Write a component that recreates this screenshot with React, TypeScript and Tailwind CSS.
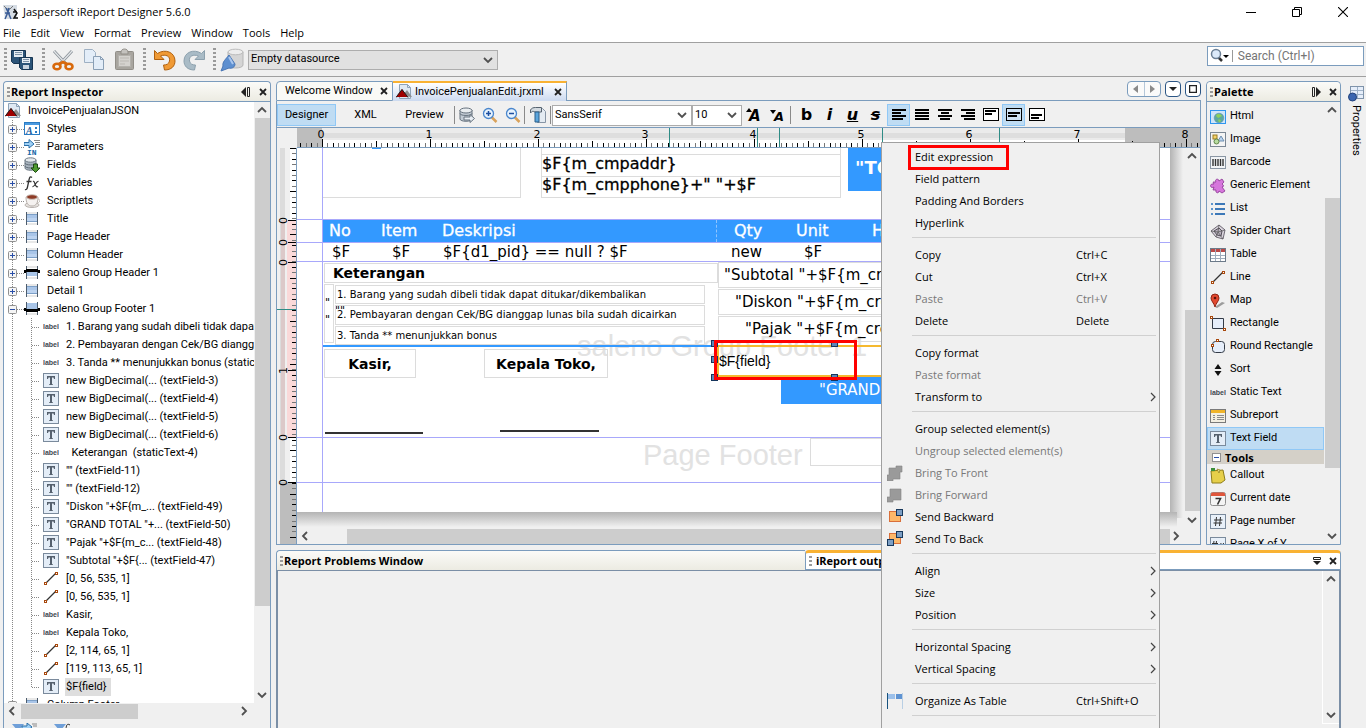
import React, { useState } from 'react';

const UI = 'font-[Roboto,"Liberation_Sans",sans-serif]';
const SEGOE = 'font-["Open_Sans","Noto_Sans",sans-serif]';

/* ---------- icons ---------- */

const ICONS: Record<string, React.ReactNode> = {
  report: (
    <>
      <path d="M3.5.5h8l3 3v11h-11z" fill="#dfe9f3" stroke="#8ea3b8" />
      <path d="M11.5.5v3h3" fill="none" stroke="#8ea3b8" />
      <path d="M6 12l5-6 5 7z" fill="#8d8d8d" />
      <path d="M0 13l6-8 6 8z" fill="#a00000" />
      <path d="M0 13.5l6-8 6 8" fill="none" stroke="#222" />
    </>
  ),
  styles: (
    <>
      <rect x=".5" y="1.5" width="15" height="12" fill="#fff" stroke="#2b7cc4" />
      <path d="M1 2h14v2H1z" fill="#4a9ae0" />
      <text x="2" y="12.5" fontSize="10" fontStyle="italic" fontWeight="bold" fill="#1f5f9f" fontFamily="Liberation Serif">A</text>
      <path d="M11 6h2v2h-2zM11 10h2v2h-2z" fill="#2b7cc4" />
    </>
  ),
  params: (
    <>
      <path d="M10 1.5h6M11 3.5h5M12 5.5h4M11 7.5h5" stroke="#888" />
      <path d="M0 3.5h5V.5l5 4.5-5 4V6.5H0z" fill="#9fd0f5" stroke="#2a6ea8" />
      <text x="3" y="15.5" fontSize="8" fontWeight="bold" fill="#1c69a8" fontFamily="Liberation Mono">IN</text>
    </>
  ),
  fields: (
    <>
      <path d="M1 3v8c0 3 11 3 11 0V3z" fill="#a9b4bf" stroke="#6f7b86" />
      <ellipse cx="6.5" cy="3" rx="5.5" ry="2.2" fill="#e3e8ec" stroke="#6f7b86" />
      <path d="M1 6c0 2.6 11 2.6 11 0M1 9c0 2.6 11 2.6 11 0" fill="none" stroke="#5f6b76" />
      <path d="M9.5 7h4v4H16l-4.5 4.5L7 11h2.500z" fill="#4f9a30" stroke="#1c4a12" />
    </>
  ),
  fx: (
    <>
      <path d="M8 2.5C6.5 1 5.5 2 5 5L3.5 12c-.5 2.5-1.5 3-2.500 2.500M2.500 6.500h5" fill="none" stroke="#333" strokeWidth="1.3" />
      <path d="M9 6.500c2-1.500 2 7 5 5M14.500 6.500c-2-1-4 6-6 5" fill="none" stroke="#333" strokeWidth="1.2" />
    </>
  ),
  cup: (
    <>
      <ellipse cx="8" cy="12" rx="7" ry="2.5" fill="#e6e2df" stroke="#b9b3ae" />
      <path d="M2 4c0 6 2 9 6 9s6-3 6-9z" fill="#f5f2f0" stroke="#b8b1ab" />
      <ellipse cx="8" cy="4" rx="5.5" ry="2.3" fill="#8e3b26" stroke="#cfc7c1" />
      <path d="M14 6c3 0 2 4-1 4" fill="none" stroke="#c5beb8" />
    </>
  ),
  band: (
    <>
      <path d="M2.5 1v13M13.5 1v13" stroke="#4c5c6d" />
      <path d="M3 1h10v2H3zM3 12h10v2H3z" fill="#e8e8e8" />
      <path d="M3 3h10v8H3z" fill="#a9c5e8" />
      <path d="M3 3.5h10M3 10.500h10" stroke="#7c9fc7" />
      <path d="M3 7h10v3H3z" fill="#bcd3f0" />
    </>
  ),
  gheader: (
    <>
      <path d="M2.5 1v13M13.5 1v13" stroke="#4c5c6d" />
      <path d="M3 7h10v4H3z" fill="#a9c5e8" />
      <path d="M3 1h10v2H3zM3 12h10v2H3z" fill="#e8e8e8" />
      <path d="M0 5h2V4h12v1h2v3h-2V7H2v1H0z" fill="#000" />
    </>
  ),
  gfooter: (
    <>
      <path d="M2.5 1v13M13.5 1v13" stroke="#4c5c6d" />
      <path d="M3 2h10v6H3z" fill="#a9c5e8" />
      <path d="M3 12h10v2H3z" fill="#e8e8e8" />
      <path d="M0 7h2v1h12V7h2v3h-2v1H2v-1H0z" fill="#000" />
    </>
  ),
  label: <text x="0" y="10" fontSize="7" fontWeight="bold" fill="#3f4750" fontFamily="Liberation Sans">label</text>,
  text: (
    <>
      <rect x=".5" y=".5" width="15" height="14" fill="#e4edf7" stroke="#7a8a9c" />
      <path d="M4 3h8v3h-1l-.5-1.5H9V11l1 .5v.5H6v-.5l1-.5V4.5H5.5L5 6H4z" fill="#56616e" />
    </>
  ),
  line: (
    <>
      <path d="M2.5 12.5l10-10" stroke="#333" strokeWidth="1.2" />
      <rect x="1.5" y="11.5" width="2" height="2" fill="#fff" stroke="#a8480c" />
      <rect x="12.5" y="1.5" width="2" height="2" fill="#fff" stroke="#a8480c" />
    </>
  ),
  html: (
    <>
      <rect x=".5" y="1.5" width="15" height="13" fill="#cfe5f8" stroke="#2e96f0" />
      <circle cx="9" cy="9" r="4.8" fill="#5ba9a0" stroke="#5d8fae" strokeWidth=".6" />
      <path d="M6 6c2-2 5-1 6 1-1 1-2 0-3 2-1 0-3-1-3-3zM8 11c1-1 3 0 3 1l-2 1.5z" fill="#8ed05c" />
    </>
  ),
  image: (
    <>
      <rect x=".5" y=".5" width="15" height="14" fill="#f4f4f4" stroke="#7b8794" />
      <rect x="3" y="3" width="4" height="4" fill="#f2d16a" stroke="#9a7a20" />
      <path d="M8 9l3-5 3 5z" fill="#b9d3ee" stroke="#6f8fb0" />
      <circle cx="6.5" cy="9.5" r="2.5" fill="#b8dca0" stroke="#62854a" />
    </>
  ),
  barcode: (
    <>
      <rect x=".5" y="1.5" width="15" height="12" fill="#f2f4f6" stroke="#8a96a3" />
      <path d="M3 4v7M5.5 4v7M8 4v7M10.5 4v7M13 4v7" stroke="#333" strokeWidth="1.4" />
    </>
  ),
  puzzle: (
    <path d="M6 4C4 1 9 0 9 3l3-2 2 3-2 2c2 1 2 3 0 3l3 4-3 2-3-2c0 3-4 2-3-1H3l1-3c-3 2-5-2-2-3h2l-1-2z" fill="#d676dc" stroke="#8a3592" strokeWidth=".8" />
  ),
  list: (
    <>
      <path d="M5 3h10M5 8h10M5 13h10" stroke="#3c78b8" strokeWidth="2" />
      <path d="M1 3h2M1 8h2M1 13h2" stroke="#5b93cc" strokeWidth="2" />
    </>
  ),
  spider: (
    <>
      <path d="M9 1l6 5-2 9-7-2-5-6z" fill="#d9d4dc" stroke="#6e6873" />
      <path d="M9 4l3 3-1 5-4-1-3-4z" fill="#b9b1be" stroke="#554f5a" />
      <path d="M9 1L8 8l7-2M8 8l5 7M8 8l-2 5M8 8L1 7" stroke="#555" fill="none" strokeWidth=".7" />
    </>
  ),
  table: (
    <>
      <rect x=".5" y="1.5" width="15" height="13" fill="#fff" stroke="#6c7a89" />
      <path d="M1 2h14v3H1z" fill="#b94a48" />
      <path d="M5.5 2v12M10.5 2v12M1 8.5h14M1 11.5h14" stroke="#9fadbc" />
    </>
  ),
  map: (
    <>
      <path d="M5 14l7-5 3 1-8 5z" fill="#777" opacity=".7" />
      <path d="M5 14C4 10 1 8 1 5a4 4 0 018 0c0 3-3 5-4 9z" fill="#e2492f" stroke="#8e2413" />
      <circle cx="5" cy="5" r="1.300" fill="#5a120a" />
    </>
  ),
  rect: (
    <>
      <path d="M2.5 2.5h11v10h-11z" fill="#e6eefa" stroke="#333b47" />
      <rect x=".5" y=".5" width="2" height="2" fill="#fff" stroke="#a8480c" />
      <rect x="13.5" y="12.5" width="2" height="2" fill="#fff" stroke="#a8480c" />
    </>
  ),
  roundrect: (
    <>
      <rect x="2.5" y="2.5" width="12" height="11" rx="3" fill="#e6eefa" stroke="#333b47" />
      <rect x="1.5" y="5.5" width="2" height="2" fill="#fff" stroke="#a8480c" />
      <rect x="6.5" y=".5" width="2" height="2" fill="#fff" stroke="#a8480c" />
    </>
  ),
  sort: <path d="M4.5 7L8 2l3.500 5zM4.500 9L8 14l3.500-5z" fill="#111" />,
  subreport: (
    <>
      <rect x=".5" y="1.5" width="15" height="13" fill="#f3efe2" stroke="#7a7a7a" />
      <path d="M1 2h14v3H1z" fill="#f0b429" />
      <path d="M3 7.5h2M3 9.5h2M3 11.5h2M7 7.5h7M7 9.5h7M7 11.5h7" stroke="#8a8a8a" />
    </>
  ),
  callout: (
    <>
      <path d="M1 3l12-1 2 10-4 3H2z" fill="#e6cf4a" stroke="#8e7d1a" />
      <path d="M7 1l2 4 1-3z" fill="#f5eaa0" stroke="#8e7d1a" strokeWidth=".7" />
      <path d="M1 0h4v3H1z" fill="#3c8f3a" />
    </>
  ),
  date: (
    <>
      <rect x=".5" y="1.5" width="15" height="13" rx="2" fill="#f4f4f4" stroke="#8f8f8f" />
      <path d="M1 3c0-1 1-1.500 2-1.500h10c1 0 2 .5 2 1.500v2H1z" fill="#e0563c" />
      <path d="M5.500 7.500h5l-3 6" fill="none" stroke="#333" strokeWidth="1.600" />
    </>
  ),
  hash: (
    <>
      <rect x=".5" y=".5" width="15" height="14" fill="#e8f0f9" stroke="#7a8a9c" />
      <path d="M6.5 3l-1 9M10.5 3l-1 9M4 6h8.500M3.500 9H12" stroke="#333" fill="none" />
    </>
  ),
  hash2: (
    <>
      <rect x=".5" y=".5" width="15" height="14" fill="#e8f0f9" stroke="#7a8a9c" />
      <path d="M4 4l-1 8M6.5 4l-1 8M2 6.5h6M2 9.500h5.500M11 6l-1 6M13.500 6l-1 6M9 8h5.500M9 10.500h5" stroke="#333" fill="none" />
    </>
  ),
  front: <path d="M9 1h6v6h-2v7H6v2H0v-6h2V3h7z" fill="#9a9a9a" stroke="#858585" strokeWidth=".6" />,
  forward: <path d="M3 2h11v11H6v2H0v-5h3z" fill="#9a9a9a" stroke="#858585" strokeWidth=".6" />,
  backward: (
    <>
      <rect x="2.5" y="2.5" width="11" height="10" fill="#fdb869" stroke="#d9703a" />
      <rect x="9.5" y=".5" width="6" height="6" fill="#7d9fc4" stroke="#17385c" />
    </>
  ),
  back: (
    <>
      <rect x="2.5" y="2.5" width="11" height="10" fill="#fdb869" stroke="#d9703a" />
      <rect x="9.5" y=".5" width="6" height="6" fill="#7d9fc4" stroke="#17385c" />
      <rect x=".5" y="8.5" width="6" height="6" fill="#7d9fc4" stroke="#17385c" />
    </>
  ),
  organize: (
    <>
      <path d="M1 1h7v5H1z" fill="#9cc0ea" />
      <path d="M9 1h6v5H9z" fill="#5f93d2" />
      <path d="M.5 0v16" stroke="#17527e" />
      <path d="M15.5 0v16" stroke="#b9cfe4" />
    </>
  ),
  dbgo: (
    <>
      <path d="M1 3v9c0 3 12 3 12 0V3z" fill="#c3ccd5" stroke="#66727e" />
      <ellipse cx="7" cy="3.500" rx="6" ry="2.500" fill="#e9edf0" stroke="#66727e" />
      <path d="M1 6.500c0 2.600 12 2.600 12 0" fill="none" stroke="#66727e" />
      <path d="M5 10h6V7.500l4.500 4-4.500 4V13H5z" fill="#e8eef4" stroke="#66727e" />
    </>
  ),
  zoomin: (
    <>
      <path d="M9.5 10l5 5" stroke="#d9a25a" strokeWidth="2.500" />
      <circle cx="6.5" cy="6.5" r="5" fill="#e6f2fd" stroke="#4a86cc" strokeWidth="1.300" />
      <path d="M4 6.5h5M6.5 4v5" stroke="#1d4fa0" strokeWidth="1.500" />
    </>
  ),
  zoomout: (
    <>
      <path d="M9.5 10l5 5" stroke="#d9a25a" strokeWidth="2.500" />
      <circle cx="6.5" cy="6.5" r="5" fill="#e6f2fd" stroke="#4a86cc" strokeWidth="1.300" />
      <path d="M4 6.5h5" stroke="#1d4fa0" strokeWidth="1.500" />
    </>
  ),
  hammer: (
    <>
      <path d="M8.5 1.5h4l3 3v11h-8z" fill="#e4ebf2" stroke="#8795a5" />
      <path d="M.5 3c1-2 3-2.500 5-2.500h6V5H5C3 4 2 4 .5 6z" fill="#d3dae0" stroke="#55626f" />
      <path d="M5 5h4v10H5z" fill="#5ba5dc" stroke="#2b5f8a" />
    </>
  ),
  grow: (
    <>
      <path d="M0 5l3-4 3 4z" fill="#000" />
      <text x="3" y="14" fontSize="15" fontStyle="italic" fontWeight="bold" fontFamily="DejaVu Sans">A</text>
    </>
  ),
  shrink: (
    <>
      <path d="M0 3h6L3 7z" fill="#000" />
      <text x="4" y="14" fontSize="13" fontStyle="italic" fontWeight="bold" fontFamily="DejaVu Sans">A</text>
    </>
  ),
  left: <path d="M1 3h14M1 6h9M1 9h14M1 12h11" stroke="#000" strokeWidth="2" />,
  justify: <path d="M1 3h14M1 6h14M1 9h14M1 12h14" stroke="#000" strokeWidth="2" />,
  center: <path d="M1 3h14M4 6h8M1 9h14M3 12h10" stroke="#000" strokeWidth="2" />,
  right: <path d="M1 3h14M6 6h9M1 9h14M4 12h11" stroke="#000" strokeWidth="2" />,
  vtop: (
    <>
      <rect x=".5" y="1.5" width="15" height="12" fill="#fff" stroke="#000" />
      <path d="M2 4h11M2 7h7" stroke="#000" strokeWidth="2" />
    </>
  ),
  vmid: (
    <>
      <rect x=".5" y="1.5" width="15" height="12" fill="#cfe3f5" stroke="#000" />
      <path d="M2 6h12M2 9h9" stroke="#000" strokeWidth="2" />
    </>
  ),
  vbot: (
    <>
      <rect x=".5" y="1.5" width="15" height="12" fill="#fff" stroke="#000" />
      <path d="M2 8h11M2 11h8" stroke="#000" strokeWidth="2" />
    </>
  ),
  saveall: (
    <>
      <path d="M1.5 2.5h14v13h-12l-2-2z" fill="#2c5478" stroke="#173552" />
      <path d="M4 3h9v6H4z" fill="#e6edf3" />
      <path d="M5 4.5h7M5 6.5h7" stroke="#7d93a8" />
      <path d="M9.5 9.5h13v12h-11l-2-2z" fill="#2c5478" stroke="#173552" />
      <path d="M12 10h8v5h-8z" fill="#e6edf3" />
      <path d="M13 11.5h6M13 13.5h6" stroke="#7d93a8" />
      <path d="M13 17h6v4h-6z" fill="#c8d3de" />
    </>
  ),
  cut: (
    <>
      <path d="M3 3l12 13M21 3L9 16" stroke="#8d949b" strokeWidth="3" />
      <path d="M3 3l12 13M21 3L9 16" stroke="#e3e6e9" strokeWidth="1.200" />
      <ellipse cx="6" cy="18.500" rx="3.500" ry="2.800" fill="none" stroke="#d8690c" strokeWidth="2.600" />
      <ellipse cx="18" cy="18.500" rx="3.500" ry="2.800" fill="none" stroke="#d8690c" strokeWidth="2.600" />
      <path d="M8 16l4-2 4 2" stroke="#d8690c" strokeWidth="2.800" fill="none" />
    </>
  ),
  copy: (
    <>
      <path d="M2.5 1.5h8l3 3v10h-11z" fill="#e3edf8" stroke="#9eb0c3" />
      <path d="M11.5 8.5h7l3 3v10h-10z" fill="#e3edf8" stroke="#8a9fb5" />
      <path d="M18.5 8.5v3h3" fill="none" stroke="#8a9fb5" />
    </>
  ),
  paste: (
    <>
      <rect x="2.5" y="3.5" width="18" height="18" rx="1" fill="#a8a59f" stroke="#918e88" />
      <rect x="5.5" y="7.5" width="12" height="11" fill="#d4d2ce" stroke="#b3b1ac" />
      <path d="M8 4c0-4 7-4 7 0v2H8z" fill="#c4c2be" stroke="#918e88" />
      <path d="M7 10h9M7 13h9M7 16h5" stroke="#bbb8b3" />
    </>
  ),
  undo: <path d="M2.5 2.500v9h9.500L8.500 8c5-2 10 0 9 5-.5 3-3 4-6 4l1 5c7 0 10.500-4 10.500-9C23 4 13 .5 5.500 5.500z" fill="#f09a35" stroke="#b0610f" />,
  redo: <path d="M21.500 2.500v9H12L15.500 8c-5-2-10 0-9 5 .5 3 3 4 6 4l-1 5C4.500 22 1 18 1 13 1 4 11 .5 18.500 5.500z" fill="#a9bbc6" stroke="#8ca0ad" />,
  datasource: (
    <>
      <path d="M8 4v13c0 4 15 4 15 0V4z" fill="#d5d5d5" stroke="#b5b5b5" />
      <ellipse cx="15.500" cy="4" rx="7.500" ry="2.800" fill="#ededed" stroke="#bbb" />
      <path d="M9 7l6 9c0 3-3 5-6 4l-8 3 2-5c-1-4 3-7 6-11z" fill="#5d8fd0" stroke="#4a76b4" />
      <path d="M9 9l4 7" stroke="#a9c6ee" strokeWidth="2" />
    </>
  ),
};

const Icon = ({ name, box = 16 }: { name: string; box?: number }) => (
  <svg viewBox={`0 0 ${box} ${box}`} width={box} height={box} className="shrink-0" aria-hidden="true">
    {ICONS[name]}
  </svg>
);

const Chevron = ({ dir }: { dir: 'up' | 'down' | 'left' | 'right' }) => {
  const d = { up: 'M2 8l4-4 4 4', down: 'M2 4l4 4 4-4', left: 'M8 2L4 6l4 4', right: 'M4 2l4 4-4 4' }[dir];
  return (
    <svg viewBox="0 0 12 12" className="size-3 shrink-0" aria-hidden="true">
      <path d={d} fill="none" stroke="#505050" strokeWidth="1.800" />
    </svg>
  );
};

const Close = () => (
  <svg viewBox="0 0 8 8" width="8" height="8" aria-hidden="true">
    <path d="M1 1l6 6M7 1L1 7" stroke="#222" strokeWidth="1.800" />
  </svg>
);

const Grip = ({ className = 'h-6' }: { className?: string }) => (
  <span className={`w-[3px] shrink-0 bg-[linear-gradient(#9a9a9a_2px,transparent_2px)] bg-[length:3px_4px] ${className}`} />
);

/* ---------- data ---------- */

type TreeRow = { icon: string; text: string; open?: boolean };

const GROUPS: TreeRow[] = [
  { icon: 'styles', text: 'Styles' },
  { icon: 'params', text: 'Parameters' },
  { icon: 'fields', text: 'Fields' },
  { icon: 'fx', text: 'Variables' },
  { icon: 'cup', text: 'Scriptlets' },
  { icon: 'band', text: 'Title' },
  { icon: 'band', text: 'Page Header' },
  { icon: 'band', text: 'Column Header' },
  { icon: 'gheader', text: 'saleno Group Header 1' },
  { icon: 'band', text: 'Detail 1' },
  { icon: 'gfooter', text: 'saleno Group Footer 1', open: true },
];

const CHILDREN: TreeRow[] = [
  { icon: 'label', text: '1. Barang yang sudah dibeli tidak dapat' },
  { icon: 'label', text: '2. Pembayaran dengan Cek/BG dianggap' },
  { icon: 'label', text: '3. Tanda ** menunjukkan bonus (staticText-3)' },
  { icon: 'text', text: 'new BigDecimal(... (textField-3)' },
  { icon: 'text', text: 'new BigDecimal(... (textField-4)' },
  { icon: 'text', text: 'new BigDecimal(... (textField-5)' },
  { icon: 'text', text: 'new BigDecimal(... (textField-6)' },
  { icon: 'label', text: '\u00a0 Keterangan \u00a0(staticText-4)' },
  { icon: 'text', text: '"" (textField-11)' },
  { icon: 'text', text: '"" (textField-12)' },
  { icon: 'text', text: '"Diskon "+$F{m_... (textField-49)' },
  { icon: 'text', text: '"GRAND TOTAL "+... (textField-50)' },
  { icon: 'text', text: '"Pajak "+$F{m_c... (textField-48)' },
  { icon: 'text', text: '"Subtotal "+$F{... (textField-47)' },
  { icon: 'line', text: '[0, 56, 535, 1]' },
  { icon: 'line', text: '[0, 56, 535, 1]' },
  { icon: 'label', text: 'Kasir,' },
  { icon: 'label', text: 'Kepala Toko,' },
  { icon: 'line', text: '[2, 114, 65, 1]' },
  { icon: 'line', text: '[119, 113, 65, 1]' },
  { icon: 'text', text: '$F{field}' },
];

const PALETTE = [
  ['html', 'Html'],
  ['image', 'Image'],
  ['barcode', 'Barcode'],
  ['puzzle', 'Generic Element'],
  ['list', 'List'],
  ['spider', 'Spider Chart'],
  ['table', 'Table'],
  ['line', 'Line'],
  ['map', 'Map'],
  ['rect', 'Rectangle'],
  ['roundrect', 'Round Rectangle'],
  ['sort', 'Sort'],
  ['label', 'Static Text'],
  ['subreport', 'Subreport'],
  ['text', 'Text Field'],
];

const TOOLS = [
  ['callout', 'Callout'],
  ['date', 'Current date'],
  ['hash', 'Page number'],
  ['hash2', 'Page X of Y'],
];

type MenuEntry = { text: string; keys?: string; off?: boolean; sub?: boolean; icon?: string; marked?: boolean };

const MENU: MenuEntry[][] = [
  [{ text: 'Edit expression', marked: true }, { text: 'Field pattern' }, { text: 'Padding And Borders' }, { text: 'Hyperlink' }],
  [
    { text: 'Copy', keys: 'Ctrl+C' },
    { text: 'Cut', keys: 'Ctrl+X' },
    { text: 'Paste', keys: 'Ctrl+V', off: true },
    { text: 'Delete', keys: 'Delete' },
  ],
  [{ text: 'Copy format' }, { text: 'Paste format', off: true }, { text: 'Transform to', sub: true }],
  [
    { text: 'Group selected element(s)' },
    { text: 'Ungroup selected element(s)', off: true },
    { text: 'Bring To Front', off: true, icon: 'front' },
    { text: 'Bring Forward', off: true, icon: 'forward' },
    { text: 'Send Backward', icon: 'backward' },
    { text: 'Send To Back', icon: 'back' },
  ],
  [{ text: 'Align', sub: true }, { text: 'Size', sub: true }, { text: 'Position', sub: true }],
  [{ text: 'Horizontal Spacing', sub: true }, { text: 'Vertical Spacing', sub: true }],
  [{ text: 'Organize As Table', keys: 'Ctrl+Shift+O', icon: 'organize' }],
];

/* Report elements, in page coordinates */
type ReportNode = { x: number; y: number; w: number; h: number; text?: string; cls?: string };

const EDGE = 'border border-[#dcdcdc]';
const HEAD = 'text-base text-white [-webkit-text-stroke:0.3px_#fff]';
const FIELD = 'text-base [-webkit-text-stroke:0.3px_#000]';
const NODES: ReportNode[] = [
  { x: 25, y: -10, w: 199, h: 60, cls: EDGE },
  { x: 244, y: -10, w: 300, h: 17, cls: EDGE },
  { x: 75, y: -3, w: 9, h: 4, cls: 'bg-[#3399ff]' },
  { x: 244, y: 6, w: 300, h: 23, text: '$F{m_cmpaddr}', cls: `${EDGE} pb-1 ${FIELD}` },
  { x: 244, y: 28, w: 300, h: 22, text: '$F{m_cmpphone}+" "+$F', cls: `${EDGE} pb-1 ${FIELD}` },
  { x: 551, y: -4, w: 305, h: 47, text: '"TOKO', cls: 'bg-[#3399ff] pl-[7px] text-lg font-bold text-white' },
  { x: 25, y: 72, w: 831, h: 22, cls: 'bg-[#3399ff]' },
  { x: 32, y: 72, w: 40, h: 22, text: 'No', cls: HEAD },
  { x: 84, y: 72, w: 60, h: 22, text: 'Item', cls: HEAD },
  { x: 145, y: 72, w: 100, h: 22, text: 'Deskripsi', cls: HEAD },
  { x: 419, y: 72, w: 18, h: 22, cls: 'border-l border-dashed border-[#8fc4ff]' },
  { x: 437, y: 72, w: 50, h: 22, text: 'Qty', cls: HEAD },
  { x: 499, y: 72, w: 50, h: 22, text: 'Unit', cls: HEAD },
  { x: 575, y: 72, w: 60, h: 22, text: 'Harga', cls: HEAD },
  { x: 35, y: 94, w: 40, h: 20, text: '$F', cls: 'text-[15px]' },
  { x: 95, y: 94, w: 40, h: 20, text: '$F', cls: 'text-[15px]' },
  { x: 146, y: 94, w: 220, h: 20, text: '$F{d1_pid} == null ? $F', cls: 'text-[15px]' },
  { x: 434, y: 94, w: 60, h: 20, text: 'new', cls: 'text-[15px]' },
  { x: 507, y: 94, w: 40, h: 20, text: '$F', cls: 'text-[15px]' },
  { x: 27, y: 115, w: 394, h: 20, text: 'Keterangan', cls: `${EDGE} pl-[8px] text-[14px] font-bold` },
  { x: 27, y: 136, w: 10, h: 59, cls: EDGE },
  { x: 28, y: 148, w: 8, h: 12, text: '"', cls: 'text-[11px]' },
  { x: 28, y: 165, w: 8, h: 12, text: '"', cls: 'text-[11px]' },
  { x: 38, y: 156, w: 20, h: 12, text: '""', cls: 'text-[11px]' },
  { x: 38, y: 137, w: 370, h: 19, text: '1. Barang yang sudah dibeli tidak dapat ditukar/dikembalikan', cls: `${EDGE} pl-px text-[10px]` },
  { x: 38, y: 157, w: 370, h: 20, text: '2. Pembayaran dengan Cek/BG dianggap lunas bila sudah dicairkan', cls: `${EDGE} pl-px text-[10px]` },
  { x: 38, y: 178, w: 370, h: 19, text: '3. Tanda ** menunjukkan bonus', cls: `${EDGE} pl-px text-[10px]` },
  { x: 421, y: 114, w: 435, h: 26, text: '"Subtotal "+$F{m_crdt}', cls: `${EDGE} pl-[5px] text-[15px]` },
  { x: 421, y: 141, w: 435, h: 26, text: '"Diskon "+$F{m_crdt}', cls: `${EDGE} pl-[16px] text-[15px]` },
  { x: 421, y: 168, w: 435, h: 26, text: '"Pajak "+$F{m_crdt}', cls: `${EDGE} pl-[26px] text-[15px]` },
  { x: 25, y: 197, w: 394, h: 2, cls: 'bg-[#3399ff]' },
  { x: 27, y: 201, w: 92, h: 29, text: 'Kasir,', cls: `${EDGE} justify-center text-[14px] font-bold` },
  { x: 187, y: 201, w: 124, h: 29, text: 'Kepala Toko,', cls: `${EDGE} justify-center text-[14px] font-bold` },
  { x: 28, y: 284, w: 98, h: 2, cls: 'bg-[#333]' },
  { x: 203, y: 282, w: 99, h: 2, cls: 'bg-[#333]' },
  { x: 513, y: 290, w: 343, h: 28, cls: EDGE },
  { x: 484, y: 228, w: 372, h: 28, text: '"GRAND TOTAL "', cls: 'bg-[#3399ff] pl-[38px] text-[15px] text-white' },
];

/* ---------- pieces ---------- */

const PanelHead = ({ title, children }: { title: string; children?: React.ReactNode }) => (
  <div className="flex h-5 shrink-0 items-center gap-px rounded-t-sm border-b border-[#7b9cbd] bg-gradient-to-b from-[#fbfbf8] to-[#ecebe2] px-[3px]">
    <Grip className="h-[10px]" />
    <h2 className={`${SEGOE} flex-1 text-[11px] font-bold leading-4`}>{title}</h2>
    <span className="flex items-center gap-2">{children}</span>
  </div>
);

const IconButton = ({ label, children, className = '' }: { label: string; children: React.ReactNode; className?: string }) => (
  <button type="button" aria-label={label} className={`flex shrink-0 items-center justify-center ${className}`}>
    {children}
  </button>
);

const VScroll = ({ before, thumb, after }: { before: string; thumb: string; after: string }) => (
  <div className="flex w-4 shrink-0 flex-col items-center bg-[#f0f0f0]">
    <span className="flex h-4 items-center"><Chevron dir="up" /></span>
    <span className={before} />
    <span className={`w-[15px] bg-[#cdcdcd] ${thumb}`} />
    <span className={after} />
    <span className="flex h-4 items-center"><Chevron dir="down" /></span>
  </div>
);

const GroupRow = ({ row }: { row: TreeRow }) => (
  <li className="flex h-[18px] items-center">
    <svg width="20" height="18" className="shrink-0" aria-hidden="true">
      <path d="M8.500 0v18M13 9.500h7" stroke="#888" strokeDasharray="1 1" fill="none" />
      <rect x="4.500" y="5.500" width="8" height="8" rx="1" fill="#f5f5f5" stroke="#919191" />
      <path d={row.open ? 'M6 9.500h5' : 'M6 9.500h5M8.500 7v5'} stroke="#2a4fa8" />
    </svg>
    <Icon name={row.icon} />
    <span className="pl-[7px]">{row.text}</span>
  </li>
);

const ChildRow = ({ row, last }: { row: TreeRow; last: boolean }) => (
  <li className="flex h-[18px] items-center whitespace-nowrap">
    <svg width="39" height="18" className="shrink-0" aria-hidden="true">
      <path d={`M8.500 0v18M27.500 0v${last ? 9 : 18}M28 9.500h8`} stroke="#888" strokeDasharray="1 1" fill="none" />
    </svg>
    <Icon name={row.icon} />
    <span className={last ? 'ml-[6px] bg-[#dedede] pl-px pr-1 leading-[18px]' : 'pl-[7px]'}>{row.text}</span>
  </li>
);

const Inspector = () => (
  <aside className="flex w-[268px] shrink-0 flex-col rounded-t-sm border-x border-t border-[#7b9cbd] bg-[#f0f0f0]">
    <PanelHead title="Report Inspector">
      <IconButton label="Minimize">
        <svg width="10" height="10" aria-hidden="true"><path d="M5 0v10L0 5z" fill="#222" /><path d="M6.500.5h2v9h-2z" fill="none" stroke="#222" /></svg>
      </IconButton>
      <IconButton label="Close"><Close /></IconButton>
    </PanelHead>
    <div className="flex min-h-0 flex-1">
      <ul className={`${UI} min-w-0 flex-1 overflow-hidden bg-white text-[11px] leading-[18px]`}>
        <li className="flex h-[18px] items-center pl-px">
          <Icon name="report" />
          <span className="pl-[7px]">InvoicePenjualanJSON</span>
        </li>
        {GROUPS.map((row) => <GroupRow key={row.text} row={row} />)}
        {CHILDREN.map((row, i) => <ChildRow key={i} row={row} last={i === CHILDREN.length - 1} />)}
        <GroupRow row={{ icon: 'band', text: 'Column Footer' }} />
      </ul>
      <VScroll before="h-0" thumb="grow-[6]" after="grow" />
    </div>
    <div className="flex h-4 shrink-0 items-center pr-5">
      <span className="flex w-[17px] pl-[2px]"><Chevron dir="left" /></span>
      <span className="h-[15px] w-[117px] bg-[#cdcdcd]" />
      <span className="flex-1" />
      <Chevron dir="right" />
    </div>
    <div className="flex h-[9px] shrink-0 items-start gap-4 overflow-hidden pl-2 pt-1">
      <svg width="26" height="8" aria-hidden="true"><path d="M0 1h12L7 7H5z" fill="#6f9fd8" /><path d="M10 3h5V0l5 4-5 4V6h-5z" fill="#9fd0f5" stroke="#2a6ea8" /><path d="M20 1h5M21 3h4" stroke="#888" /></svg>
      <svg width="20" height="8" aria-hidden="true"><path d="M0 1h12L7 7H5z" fill="#6f9fd8" /><path d="M12 8c0-6 1-8 4-6" fill="none" stroke="#333" /></svg>
    </div>
  </aside>
);

const HRuler = () => {
  const ticks = Array.from({ length: 168 }, (_, i) => i - 4);
  return (
    <svg width="905" height="20" className="shrink-0" aria-hidden="true">
      <rect width="905" height="20" fill="#ebebeb" />
      <rect y="5" width="905" height="5" fill="#dedede" />
      <rect y="12" width="905" height="8" fill="#fff" />
      <rect width="25" height="20" fill="#bdbdbd" />
      <rect x="828" width="77" height="20" fill="#bdbdbd" />
      {ticks.map((t) => (
        <path key={t} d={`M${Math.round(25 + t * 5.4) + 0.5} 19v-${t % 20 === 0 ? 8 : t % 10 === 0 ? 6 : 4}`} stroke={t % 2 ? '#777' : '#000'} />
      ))}
      {[0, 1, 2, 3, 4, 5, 6, 7, 8].map((n) => (
        <text key={n} x={24 + n * 108} y="10" fontSize="11" textAnchor="middle" fontFamily="DejaVu Sans">{n}</text>
      ))}
      {[372, 460, 482, 585, 702].map((x) => <path key={x} d={`M${x + 0.5} 0v20`} stroke="#2f8c86" />)}
      <path d="M0 19.500h905" stroke="#7b9cbd" />
    </svg>
  );
};

const VRuler = () => (
  <svg width="20" height="396" className="shrink-0" aria-hidden="true">
    <rect width="20" height="396" fill="#f0f0f0" />
    <rect x="3" width="5" height="396" fill="#dcdcdc" />
    <rect x="13" width="6" height="334" fill="#fff" />
    <rect x="10" y="72" width="9" height="217" fill="#fad9d9" />
    <rect x="4" y="72" width="4" height="217" fill="#dcc9c9" />
    <rect x="3" y="334" width="16" height="62" fill="#bdbdbd" />
    {Array.from({ length: 73 }, (_, i) => (
      <path key={i} d={`M19 ${Math.round(i * 5.4) + 0.5}h-${i % 8 === 0 ? 6 : 4}`} stroke={i % 2 ? '#777' : '#000'} />
    ))}
    {[[72, '0'], [94, '0'], [114, '0'], [222, '1'], [289, '0'], [334, '0']].map(([y, n]) => (
      <g key={y}>
        <path d={`M11 ${Number(y) + 0.5}h8`} stroke="#000" />
        <text transform={`translate(10 ${Number(y) + 4}) rotate(-90)`} fontSize="11" fontFamily="DejaVu Sans">{n}</text>
      </g>
    ))}
    <path d="M0 161.500h19" stroke="#2f8c86" />
    <path d="M19.500 0v396" stroke="#7b9cbd" />
  </svg>
);

const Canvas = () => (
  <div className="relative min-w-0 flex-1 overflow-hidden bg-[#f0f0f0] font-['DejaVu_Sans',sans-serif]">
    <div className="absolute left-0 top-0 h-[364px] w-[873px] overflow-hidden bg-white" />
    <div className="absolute left-[873px] top-0 h-[370px] w-[13px] bg-gradient-to-r from-[#b4b4b4] to-[#f0f0f0]" />
    <div className="absolute left-0 top-[364px] h-[15px] w-[880px] bg-gradient-to-b from-[#b4b4b4] to-[#f0f0f0]" />
    <div className="absolute left-0 top-0 h-[364px] w-[873px] overflow-hidden">
      <span className="absolute left-[280px] top-[182px] whitespace-nowrap font-['Liberation_Sans',sans-serif] text-[29px] leading-8 text-[#e2e2e2]">saleno Group Footer 1</span>
      <span className="absolute left-[346px] top-[291px] whitespace-nowrap font-['Liberation_Sans',sans-serif] text-[29px] leading-8 text-[#e2e2e2]">Page Footer</span>
      {NODES.map((n, i) => (
        <div
          key={i}
          className={`absolute flex items-center whitespace-nowrap leading-none ${n.cls ?? ''}`}
          style={{ left: n.x, top: n.y, width: n.w, height: n.h }}
        >
          {n.text}
        </div>
      ))}
      {[71, 94, 113, 289, 334].map((y) => (
        <div key={y} className="absolute left-0 h-px w-full bg-[#a8a8fb]" style={{ top: y }} />
      ))}
      <div className="absolute left-[25px] top-0 h-full w-px bg-[#a8a8fb]" />
      <div className="absolute left-[420px] top-[197px] flex h-[32px] w-[440px] items-center border-2 border-[#f5b92f] font-['Liberation_Sans',sans-serif] text-[14px]">
        $F&#123;field&#125;
      </div>
      {[[414, 192], [534, 192], [414, 208], [414, 226], [534, 226]].map(([x, y]) => (
        <div key={`${x}-${y}`} className="absolute size-[7px] border border-[#16365c] bg-[#5b86b8]" style={{ left: x, top: y }} />
      ))}
      <div className="absolute left-[417px] top-[192px] h-[40px] w-[143px] border-3 border-[#ff0000]" />
    </div>
  </div>
);

const EditorToolbar = () => {
  const [view, setView] = useState('Designer');
  const sep = <span className="h-[18px] w-px shrink-0 bg-[#8a8a8a]" />;
  return (
    <div className={`${UI} flex h-[27px] shrink-0 items-center border-b border-[#7b9cbd] bg-[#f0f0f0] pt-[2px] text-[11px]`}>
      {['Designer', 'XML', 'Preview'].map((v) => (
        <button
          key={v}
          type="button"
          onClick={() => setView(v)}
          className={`h-[22px] w-[59px] shrink-0 border ${v === view ? 'border-[#90c8f6] bg-[#bfdcf3]' : 'border-transparent'}`}
        >
          {v}
        </button>
      ))}
      {sep}
      <IconButton label="Datasource" className="w-[23px]"><Icon name="dbgo" /></IconButton>
      <IconButton label="Zoom in" className="w-[23px]"><Icon name="zoomin" /></IconButton>
      <IconButton label="Zoom out" className="w-[23px]"><Icon name="zoomout" /></IconButton>
      {sep}
      <IconButton label="Format tools" className="w-[25px]"><Icon name="hammer" /></IconButton>
      {sep}
      <span className="relative ml-px flex h-[21px] w-[140px] shrink-0">
        <select aria-label="Font" className="w-full appearance-none border border-[#acacac] bg-white px-[2px]"><option>SansSerif</option></select>
        <span className="pointer-events-none absolute right-1 top-1"><Chevron dir="down" /></span>
      </span>
      <span className="relative flex h-[21px] w-[50px] shrink-0">
        <select aria-label="Font size" className="w-full appearance-none border border-[#acacac] bg-white px-[2px]"><option>10</option></select>
        <span className="pointer-events-none absolute right-1 top-1"><Chevron dir="down" /></span>
      </span>
      <IconButton label="Increase size" className="w-6"><Icon name="grow" /></IconButton>
      <IconButton label="Decrease size" className="mr-px w-[23px]"><Icon name="shrink" /></IconButton>
      {sep}
      <span className="flex pl-1 font-['DejaVu_Sans',sans-serif] text-base font-bold leading-5">
        <button type="button" className="w-[23px]">b</button>
        <button type="button" className="w-[23px] italic">i</button>
        <button type="button" className="w-[23px] italic underline">u</button>
        <button type="button" className="w-[23px] italic line-through">s</button>
      </span>
      {['left', 'justify', 'center', 'right', 'vtop', 'vmid', 'vbot'].map((a) => (
        <IconButton
          key={a}
          label={a}
          className={`h-[22px] w-[23px] border ${a === 'left' || a === 'vmid' ? 'border-[#90c8f6] bg-[#bfdcf3]' : 'border-transparent'}`}
        >
          <Icon name={a} />
        </IconButton>
      ))}
    </div>
  );
};

const Editor = () => (
  <section className="flex min-w-0 flex-1 flex-col border-b border-[#7b9cbd]">
    <div className={`${UI} flex h-5 shrink-0 items-end text-[11px]`}>
      <div className="flex h-5 items-center gap-[6px] rounded-tl-sm border border-[#7b9cbd] bg-[#fafaf6] pl-2 pr-1">
        <button type="button" className="w-[89px] whitespace-nowrap text-left">Welcome Window</button>
        <IconButton label="Close Welcome Window"><Close /></IconButton>
      </div>
      <div className="flex h-5 items-center gap-[3px] border-r border-t-2 border-[#7b9cbd] border-t-[#f9b233] bg-gradient-to-b from-white to-[#ccdaf0] pl-[3px] pr-1">
        <Icon name="report" />
        <button type="button" className="w-[136px] whitespace-nowrap text-left">InvoicePenjualanEdit.jrxml</button>
        <IconButton label="Close InvoicePenjualanEdit.jrxml"><Close /></IconButton>
      </div>
      <div className="flex h-full flex-1 items-start justify-end gap-1 border-b border-[#7b9cbd]">
        <span className="flex rounded-sm border border-[#7b9cbd] bg-[#fafafa]">
          <IconButton label="Scroll tabs left" className="h-[14px] w-4"><svg width="6" height="8" aria-hidden="true"><path d="M5 0v8L0 4z" fill="#8a8a8a" /></svg></IconButton>
          <IconButton label="Scroll tabs right" className="h-[14px] w-4 border-l border-[#b5c7d9]"><svg width="6" height="8" aria-hidden="true"><path d="M0 0v8l5-4z" fill="#8a8a8a" /></svg></IconButton>
        </span>
        <IconButton label="Tab list" className="size-4 rounded-sm border border-[#2b5584] bg-white"><svg width="8" height="5" aria-hidden="true"><path d="M0 0h8L4 4z" fill="#222" /></svg></IconButton>
        <IconButton label="Maximize" className="size-4 rounded-sm border border-[#2b5584] bg-white"><svg width="8" height="8" aria-hidden="true"><path d="M.5.5h7v7h-7z" fill="none" stroke="#222" strokeWidth="1.500" /></svg></IconButton>
      </div>
    </div>
    <div className="flex min-h-0 flex-1 flex-col border-x border-[#7b9cbd]">
      <EditorToolbar />
      <div className="flex h-5 shrink-0 overflow-hidden pl-5"><HRuler /></div>
      <div className="flex min-h-0 flex-1 overflow-hidden">
        <VRuler />
        <div className="flex min-w-0 flex-1 flex-col">
          <div className="flex min-h-0 flex-1">
            <Canvas />
            <VScroll before="grow-[146]" thumb="grow-[202]" after="grow" />
          </div>
          <div className="flex h-4 shrink-0 items-center bg-[#f0f0f0] pr-[18px]">
            <span className="flex w-[50px] pl-[2px]"><Chevron dir="left" /></span>
            <span className="h-[15px] flex-1 bg-[#cdcdcd]" />
            <Chevron dir="right" />
          </div>
        </div>
      </div>
    </div>
  </section>
);

const Palette = () => (
  <aside className={`${UI} flex w-[135px] shrink-0 flex-col rounded-t-sm border border-[#7b9cbd] bg-[#f0f0f0] text-[11px]`}>
    <PanelHead title="Palette">
      <IconButton label="Minimize">
        <svg width="10" height="10" aria-hidden="true"><path d="M5 0v10l5-5z" fill="#222" /><path d="M1.500.5h2v9h-2z" fill="none" stroke="#222" /></svg>
      </IconButton>
      <IconButton label="Close"><Close /></IconButton>
    </PanelHead>
    <div className="flex min-h-0 flex-1">
      <div className="min-w-0 flex-1 overflow-hidden pt-[3px]">
        {PALETTE.map(([icon, text]) => (
          <button
            key={text}
            type="button"
            className={`flex h-[23px] w-full items-center gap-1 whitespace-nowrap border pl-[2px] ${text === 'Text Field' ? 'border-[#90c8f6] bg-[#bfdcf3]' : 'border-transparent'}`}
          >
            <Icon name={icon} />
            {text}
          </button>
        ))}
        <h3 className={`${SEGOE} flex h-[14px] items-center gap-1 bg-[#d4d0c8] pl-[5px] font-bold leading-none`}>
          <svg width="9" height="9" aria-hidden="true"><rect x=".5" y=".5" width="8" height="8" fill="#fff" stroke="#919191" /><path d="M2 4.500h5" stroke="#2a4fa8" /></svg>
          Tools
        </h3>
        {TOOLS.map(([icon, text]) => (
          <button key={text} type="button" className="flex h-[23px] w-full items-center gap-1 whitespace-nowrap border border-transparent pl-[2px]">
            <Icon name={icon} />
            {text}
          </button>
        ))}
      </div>
      <VScroll before="grow-[80]" thumb="grow-[269]" after="grow-[60]" />
    </div>
  </aside>
);

const Output = () => (
  <section className="flex h-[178px] shrink-0 flex-col">
    <div className="flex h-5 shrink-0">
      <div className="flex flex-1 flex-col rounded-tl-sm border-l border-t border-[#7b9cbd]"><PanelHead title="Report Problems Window" /></div>
      <div className={`${SEGOE} flex flex-1 items-center gap-1 rounded-t-sm border-x border-b border-t-3 border-[#7b9cbd] border-t-[#f9b233] bg-white px-[3px] text-[11px] font-bold`}>
        <Grip className="h-[10px]" />
        <h2 className="flex-1">iReport output</h2>
        <span className="flex items-center gap-2">
          <IconButton label="Minimize"><svg width="8" height="9" aria-hidden="true"><path d="M.5.5h7v2h-7z" fill="none" stroke="#222" /><path d="M0 4h8L4 8z" fill="#222" /></svg></IconButton>
          <IconButton label="Close output"><Close /></IconButton>
        </span>
      </div>
    </div>
    <div className="flex flex-1 justify-end border-x-2 border-t border-[#7b8fa6] bg-[#f0f0f0]">
      <div className="mb-1 flex border-b border-l border-white"><VScroll before="grow" thumb="h-0" after="grow" /></div>
    </div>
  </section>
);

const ContextMenu = () => (
  <div role="menu" className={`${SEGOE} absolute left-[881px] top-[142px] w-[279px] border border-[#a0a0a0] bg-[#f0f0f0] pb-4 pt-[3px] text-[11px]`}>
    {MENU.map((group, g) => (
      <div key={g}>
        {group.map((m) => (
          <button key={m.text} type="button" role="menuitem" disabled={m.off} className={`relative flex h-[22px] w-full items-center pl-[5px] pr-px ${m.off ? 'text-[#787878]' : 'text-black'}`}>
            <span className="flex w-7 shrink-0">{m.icon && <Icon name={m.icon} />}</span>
            <span className="w-[161px] text-left">{m.text}</span>
            <span className="flex-1 text-left">{m.keys}</span>
            {m.sub && (
              <svg width="10" height="10" aria-hidden="true"><path d="M3 1l4 4-4 4" fill="none" stroke="#444" strokeWidth="1.200" /></svg>
            )}
            {m.marked && <span className="absolute -top-px left-[26px] h-[25px] w-[101px] border-3 border-[#ff0000]" />}
          </button>
        ))}
        <div className="mb-[6px] ml-[30px] mr-[3px] mt-[2px] h-[2px] border-b border-[#d0d0d0]" />
      </div>
    ))}
  </div>
);

const App = () => {
  const [query, setQuery] = useState('');

  return (
    <div className={`${UI} relative flex h-screen flex-col overflow-hidden bg-[#f0f0f0] text-[11px] text-black`}>
      <header className={`${SEGOE} flex h-6 shrink-0 items-center bg-white pl-[3px]`}>
        <svg width="16" height="16" aria-hidden="true">
          <path d="M0 1h14v14H2z" fill="#d5dce4" />
          <path d="M1 2l3 3h3l3-3" stroke="#777" fill="none" />
          <path d="M3 4l2 4-3 7M6 4l-1 4 3 7M2 9h5" stroke="#3a5c96" strokeWidth="1.500" fill="none" />
          <path d="M11 5l3 4-3 5h4M10 8h4" stroke="#111" strokeWidth="1.500" fill="none" />
        </svg>
        <h1 className="flex-1 pl-1 text-[11px]">Jaspersoft iReport Designer 5.6.0</h1>
        <IconButton label="Minimize window" className="h-6 w-[46px]"><svg width="10" height="10" aria-hidden="true"><path d="M0 5.500h10" stroke="#000" /></svg></IconButton>
        <IconButton label="Restore window" className="h-6 w-[46px]"><svg width="10" height="10" aria-hidden="true"><path d="M.5 2.500h7v7h-7zM2.500 2.500v-2h7v7h-2" fill="none" stroke="#000" /></svg></IconButton>
        <IconButton label="Close window" className="h-6 w-[46px]"><svg width="10" height="10" aria-hidden="true"><path d="M0 0l10 10M10 0L0 10" stroke="#000" strokeWidth="1.100" /></svg></IconButton>
      </header>

      <nav className={`${SEGOE} flex h-[18px] shrink-0 items-center gap-[10px] bg-white pl-[3px] text-[11px]`}>
        {['File', 'Edit', 'View', 'Format', 'Preview', 'Window', 'Tools', 'Help'].map((m) => (
          <button key={m} type="button">{m}</button>
        ))}
      </nav>

      <div className="flex h-[35px] shrink-0 items-center border-y border-[#a0a0a0] pl-1">
        <Grip />
        <IconButton label="Save all" className="ml-[3px] mr-2"><Icon name="saveall" box={24} /></IconButton>
        <Grip />
        <span className="flex gap-[7px] px-[6px]">
          <IconButton label="Cut"><Icon name="cut" box={24} /></IconButton>
          <IconButton label="Copy"><Icon name="copy" box={24} /></IconButton>
          <IconButton label="Paste"><Icon name="paste" box={24} /></IconButton>
        </span>
        <Grip />
        <span className="flex gap-[7px] px-[6px]">
          <IconButton label="Undo"><Icon name="undo" box={24} /></IconButton>
          <IconButton label="Redo"><Icon name="redo" box={24} /></IconButton>
        </span>
        <Grip />
        <span className="px-1"><Icon name="datasource" box={24} /></span>
        <span className="relative flex h-5 w-[250px]">
          <select aria-label="Datasource" className="w-full appearance-none border border-[#adadad] bg-[#e1e1e1] px-[2px]"><option>Empty datasource</option></select>
          <span className="pointer-events-none absolute right-1 top-1"><Chevron dir="down" /></span>
        </span>
        <label className="mb-2 ml-auto mr-[2px] flex h-5 w-[157px] items-center gap-[2px] border border-[#7b9cbd] bg-white pl-[2px]">
          <svg width="20" height="16" className="shrink-0" aria-hidden="true">
            <path d="M8 9l4 4" stroke="#333" strokeWidth="2.500" />
            <circle cx="6" cy="6" r="4.500" fill="#dceafa" stroke="#6b7f95" strokeWidth="1.500" />
            <path d="M13 7h6l-3 3z" fill="#000" />
          </svg>
          <span className="h-3 w-px bg-[#999]" />
          <input aria-label="Search" value={query} onChange={(e) => setQuery(e.target.value)} placeholder="Search (Ctrl+I)" className="w-full min-w-0 px-[3px] text-[12px] outline-none placeholder:text-[#757575]" />
        </label>
      </div>

      <main className="flex min-h-0 flex-1 gap-[5px] pl-[3px] pt-[4px]">
        <Inspector />
        <div className="flex min-w-0 flex-1 flex-col gap-[5px]">
          <div className="flex min-h-0 flex-1 gap-[5px]">
            <Editor />
            <Palette />
          </div>
          <Output />
        </div>
        <div className="flex w-5 shrink-0 flex-col items-center pt-[5px]">
          <svg width="16" height="16" aria-hidden="true">
            <rect x="2.500" y=".5" width="13" height="12" fill="#e6eefa" stroke="#7f93aa" />
            <path d="M3 4.500h12M3 8.500h12M9.500 1v11" stroke="#9fb2c8" />
            <circle cx="4.500" cy="11" r="4" fill="#3c66b0" stroke="#23437c" />
          </svg>
          <button type="button" className="pt-[3px] text-[11px] [writing-mode:vertical-rl]">Properties</button>
        </div>
      </main>

      <ContextMenu />
    </div>
  );
};

export default App;
